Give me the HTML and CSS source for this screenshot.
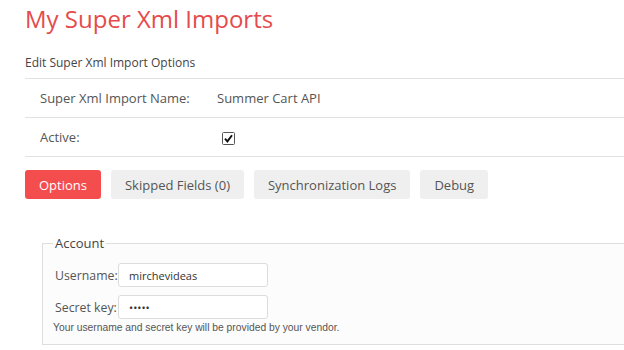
FILE: index.html
```html
<!DOCTYPE html>
<html lang="en">

<head>
    <meta charset="UTF-8">
    <meta name="viewport" content="width=device-width, initial-scale=1.0">
    <title>My Super Xml Imports</title>
    <link rel="stylesheet" href="styles.css">
</head>

<body>
    <div class="page">
        <h1>My Super Xml Imports</h1>
        <h2 class="section-title">Edit Super Xml Import Options</h2>

        <table class="options-table">
            <tbody>
                <tr>
                    <td class="label-cell">Super Xml Import Name:</td>
                    <td>Summer Cart API</td>
                </tr>
                <tr>
                    <td class="label-cell">Active:</td>
                    <td>
                        <label class="check">
                            <input type="checkbox" checked>
                            <svg width="13" height="13" viewBox="0 0 13 13">
                                <rect x="0.5" y="0.5" width="12" height="12" rx="1" fill="#fff" stroke="#555" />
                                <path d="M3 6.6 L5.4 9.4 L10 3.2" fill="none" stroke="#111" stroke-width="1.9" />
                            </svg>
                        </label>
                    </td>
                </tr>
            </tbody>
        </table>

        <div class="tabs">
            <button class="tab active">Options</button>
            <button class="tab">Skipped Fields (0)</button>
            <button class="tab">Synchronization Logs</button>
            <button class="tab">Debug</button>
        </div>

        <fieldset class="account">
            <legend>Account</legend>
            <div class="field">
                <label for="username">Username:</label>
                <input type="text" id="username" value="mirchevideas">
            </div>
            <div class="field">
                <label for="secret">Secret key:</label>
                <input type="password" id="secret" value="12345">
            </div>
            <p class="hint">Your username and secret key will be provided by your vendor.</p>
        </fieldset>
    </div>
</body>

</html>
```

FILE: styles.css
```css
* {
    box-sizing: border-box;
}

html,
body {
    margin: 0;
    padding: 0;
    overflow: hidden;
}

body {
    font-family: 'Open Sans', sans-serif;
    color: #555;
    background: #fff;
}

.page {
    padding: 4px 0 0 25px;
}

h1 {
    margin: 0;
    font-size: 24px;
    line-height: 29px;
    font-weight: 400;
    color: #e54b4d;
}

.section-title {
    margin: 21px 0 0;
    padding-bottom: 6px;
    font-size: 12px;
    line-height: 18px;
    font-weight: 400;
    color: #444;
    border-bottom: 1px solid #e2e2e2;
}

.options-table {
    width: 100%;
    border-collapse: collapse;
    font-size: 13px;
    line-height: 18px;
}

.options-table td {
    padding: 10px 15px;
    border-bottom: 1px solid #e2e2e2;
    vertical-align: middle;
    white-space: nowrap;
}

.options-table td.label-cell {
    width: 177px;
    padding-right: 10px;
}

.check {
    display: inline-block;
    margin-left: 5px;
    height: 13px;
    vertical-align: middle;
}

.check input {
    display: none;
}

.check svg {
    display: block;
}

.tabs {
    display: flex;
    gap: 10px;
    margin-top: 13px;
}

.tab {
    font-family: 'Open Sans', sans-serif;
    font-size: 13px;
    line-height: 18px;
    padding: 6px 14px 5px;
    border: none;
    border-radius: 3px;
    background: #efefef;
    color: #555;
}

.tab.active {
    background: #f44d4d;
    color: #fff;
}

.account {
    margin: 36px -20px 0 17px;
    padding: 4px 10px 11px;
    border: 1px solid #dedede;
    background: #fcfcfc;
}

.account legend {
    padding: 0 2px;
    font-size: 13px;
    line-height: 16px;
    color: #444;
}

.field {
    display: flex;
    align-items: center;
    gap: 2px;
    padding-left: 2px;
    margin-top: 8px;
}

.field label {
    flex-shrink: 0;
    width: 61px;
    font-size: 12.3px;
    white-space: nowrap;
}

.field input {
    width: 150px;
    height: 24px;
    padding: 0 10px;
    border: 1px solid #dcdcdc;
    border-radius: 3px;
    background: #fff;
    font-family: 'Open Sans', sans-serif;
    font-size: 11px;
    color: #333;
}

.hint {
    margin: 3px 0 0;
    font-family: 'Liberation Sans', Arial, sans-serif;
    font-size: 10.3px;
    color: #555;
}
```
